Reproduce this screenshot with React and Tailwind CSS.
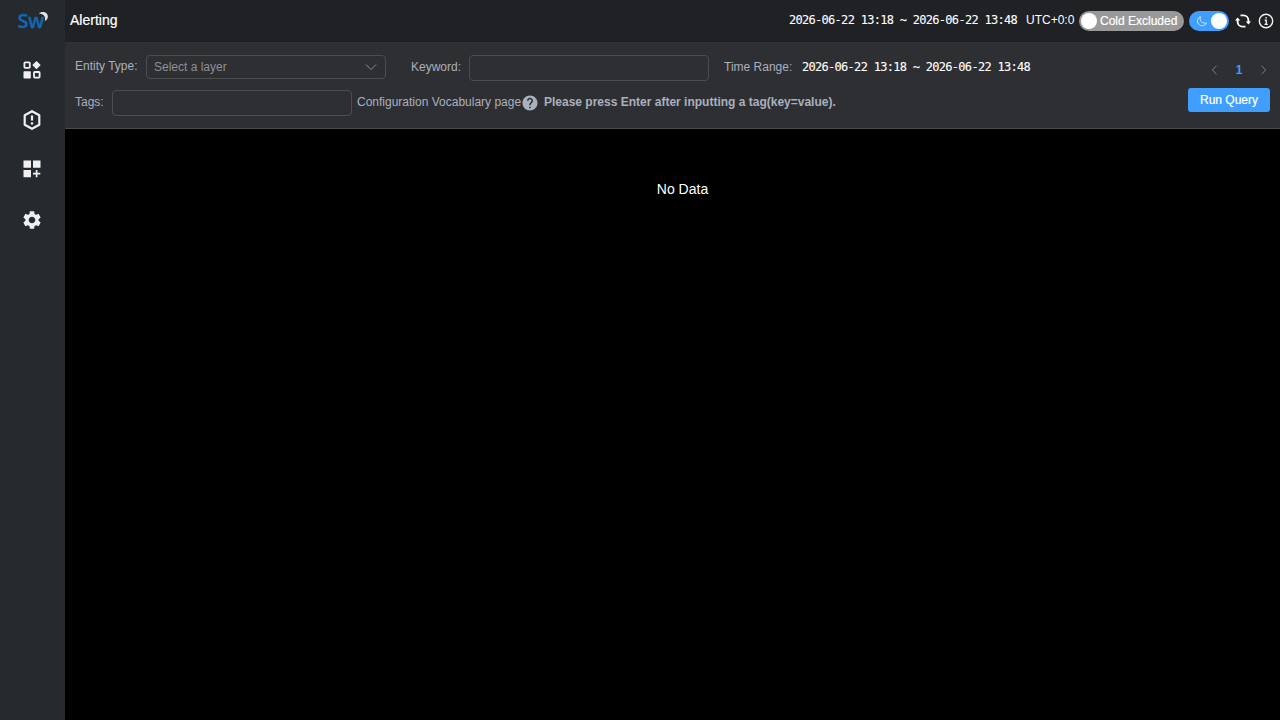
import React from "react";
import { MdSettings, MdHelp } from "react-icons/md";

function Logo() {
  return (
    <div className="relative h-[28px] w-[34px]">
      <span className="block pl-[2px] font-['Open_Sans',sans-serif] text-[20px] leading-[28px] font-semibold tracking-[-0.6px] text-[#1368b3] [-webkit-text-stroke:0.3px_#1368b3]">Sw</span>
      <svg width="11" height="12" viewBox="22.500 1 11 12" className="absolute top-[4px] left-[22px]">
        <path d="M23.500 3.400C25 1.600 29 1.200 31.200 3.400C33.300 6 32.500 9.500 29.300 11C30.600 7 28.500 3.600 23.500 3.400Z" fill="#e4e4e4" />
      </svg>
    </div>
  );
}

function Widgets() {
  return (
    <svg width="20" height="20" viewBox="0 0 20 20" className="block">
      <rect x="2.400" y="2.400" width="5.400" height="5.400" rx="0.800" fill="none" stroke="#f0f0f0" strokeWidth="1.800" />
      <path d="M14.500 0.900L18.700 5.100L14.500 9.300L10.300 5.100Z" fill="#f0f0f0" />
      <rect x="1.500" y="11.200" width="7.300" height="7.300" rx="0.700" fill="#f0f0f0" />
      <rect x="12" y="12" width="5.600" height="5.600" rx="0.800" fill="none" stroke="#f0f0f0" strokeWidth="1.800" />
    </svg>
  );
}

function Alarm() {
  return (
    <svg width="20" height="22" viewBox="0 0 20 22" className="block">
      <path d="M10 2.200L17.300 6.300V15.700L10 19.800L2.700 15.700V6.300Z" fill="none" stroke="#f0f0f0" strokeWidth="2.200" strokeLinejoin="round" />
      <path d="M10 6.600V11.600M10 13.300V15.500" stroke="#f0f0f0" strokeWidth="2.200" />
    </svg>
  );
}

function DashboardAdd() {
  return (
    <svg width="20" height="20" viewBox="0 0 20 20" className="block" fill="#f0f0f0">
      <path d="M1.500 1.500h7.500v7.200h-7.500zM11 1.500h7.500v7.200H11zM1.500 11h7.500v7.200h-7.500z" />
      <path d="M14.600 11V18.200M11 14.600H18.300" stroke="#f0f0f0" strokeWidth="1.700" />
    </svg>
  );
}

function Sidebar() {
  return (
    <nav className="flex w-[65px] shrink-0 flex-col items-center bg-[#252a2f]">
      <div className="flex h-[60px] items-start pt-[7px]">
        <Logo />
      </div>
      <div className="-ml-px flex h-[50px] items-start"><Widgets /></div>
      <div className="-ml-px flex h-[49px] items-start"><div className="-mt-px"><Alarm /></div></div>
      <div className="-ml-px flex h-[49px] items-start"><DashboardAdd /></div>
      <MdSettings className="-ml-px size-[22px] mt-[1px] text-[#f0f0f0]" />
    </nav>
  );
}

const mono = "font-['DejaVu_Sans_Mono',monospace] text-[12px] leading-[16px] tracking-[-0.71px] text-white [-webkit-text-stroke:0.1px_white]";

function Header() {
  return (
    <header className="flex h-[42px] shrink-0 items-center bg-[#202124] pb-px pr-[6px] pl-[5px] text-[12px] text-white">
      <h1 className="-mt-px text-[14px] leading-[20px] [-webkit-text-stroke:0.2px_white]">Alerting</h1>
      <time className={mono + " -mt-[2px] ml-auto w-[229px]"}>2026-06-22 13:18 ~ 2026-06-22 13:48</time>
      <span className="-mt-[2px] ml-[8px] w-[49px]">UTC+0:0</span>
      <span className="ml-[4px] flex h-[20px] w-[105px] items-center rounded-full bg-[#999999] pl-[2px]">
        <span className="size-[16px] rounded-full bg-white" />
        <span className="ml-[3px] [-webkit-text-stroke:0.2px_white]">Cold Excluded</span>
      </span>
      <span className="ml-[5px] flex h-[20px] w-[40px] items-center justify-between rounded-full bg-[#409eff] pr-[2px] pl-[7px]">
        <svg width="12" height="12" viewBox="0 0 13 13" fill="none" stroke="#dceeff">
          <path d="M4.700 1.700C3.500 6 6.500 9.500 11.500 8.700C10 11.500 6.400 12.500 3.700 10.700C0.500 8.500 1 3.500 4.700 1.700Z" />
        </svg>
        <span className="size-[16px] rounded-full bg-white" />
      </span>
      <svg width="16" height="16" viewBox="0 0 16 16" fill="none" stroke="white" strokeWidth="1.900" className="ml-[6px]">
        <path d="M5.500 2.400H8.500A4.900 4.900 0 0 1 13.400 7.300V9.500M10.500 13.600H7.500A4.900 4.900 0 0 1 2.600 8.700V6.500" />
        <path d="M0 7.600L2.600 4.500L5.200 7.600ZM10.800 8.400L13.400 11.500L16 8.400Z" fill="white" stroke="none" />
      </svg>
      <svg width="16" height="16" viewBox="0 0 16 16" fill="none" stroke="#f2f2f2" className="ml-[7px]">
        <circle cx="8" cy="8" r="6.700" strokeWidth="1.400" />
        <path d="M8.100 4V5.600M6.700 7.200H8.200V11.300M6.500 11.400H9.800" strokeWidth="1.400" />
      </svg>
    </header>
  );
}

function Filters() {
  return (
    <section className="flex h-[87px] shrink-0 flex-col border-t border-b border-t-[#323337] border-b-[#4c4d4f] bg-[#2e2f33] px-[10px] text-[12px] leading-[16px] text-[#a9b0be]">
      <div className="flex h-[45px] items-start pt-[12px]">
        <label className="mt-[3px] w-[71px]">Entity Type:</label>
        <div className="flex h-[24px] w-[240px] items-center justify-between rounded-[4px] border border-[#4c4d4f] pr-[8px] pl-[7px] text-[#8d9095]">
          <span>Select a layer</span>
          <svg width="12" height="8" viewBox="0 0 12 8" fill="none" stroke="#8d9095">
            <path d="M1 1.500L6 6.500L11 1.500" />
          </svg>
        </div>
        <label className="mt-[4px] ml-[25px] w-[58px]">Keyword:</label>
        <input aria-label="Keyword" className="h-[26px] w-[240px] rounded-[4px] border border-[#4c4d4f] bg-transparent outline-none" />
        <span className="mt-[4px] ml-[15px] w-[78px]">Time Range:</span>
        <time className={mono + " mt-[4px]"}>2026-06-22 13:18 ~ 2026-06-22 13:48</time>
        <div className="mt-[7px] mr-[3px] ml-auto flex items-center">
          <svg width="7" height="10" viewBox="0 0 7 10" fill="none" stroke="#7c7e82"><path d="M5.500 0.800L1.300 5L5.500 9.200" /></svg>
          <span className="w-[42px] text-center font-bold text-[#409eff]">1</span>
          <svg width="7" height="10" viewBox="0 0 7 10" fill="none" stroke="#7c7e82"><path d="M1.500 0.800L5.700 5L1.500 9.200" /></svg>
        </div>
      </div>
      <div className="flex items-start">
        <label className="mt-[6px] w-[37px]">Tags:</label>
        <input aria-label="Tags" className="mt-[2px] h-[26px] w-[240px] rounded-[4px] border border-[#4c4d4f] bg-transparent outline-none" />
        <span className="mt-[6px] ml-[5px] w-[164px] whitespace-nowrap">Configuration Vocabulary page</span>
        <MdHelp className="mt-[6px] size-[18px] text-[#a9b0be]" />
        <b className="mt-[6px] ml-[5px] whitespace-nowrap">Please press Enter after inputting a tag(key=value).</b>
        <button className="ml-auto h-[24px] w-[82px] rounded-[3px] bg-[#409eff] text-white [-webkit-text-stroke:0.2px_white]">Run Query</button>
      </div>
    </section>
  );
}

export default function App() {
  return (
    <div className="flex h-screen w-screen overflow-hidden bg-black font-['Liberation_Sans',Arial,sans-serif]">
      <Sidebar />
      <div className="flex min-w-0 flex-1 flex-col">
        <Header />
        <Filters />
        <main className="flex flex-1 justify-center pt-[50px] pl-[20px] text-[14px] leading-[20px] text-white">
          <p>No Data</p>
        </main>
      </div>
    </div>
  );
}
